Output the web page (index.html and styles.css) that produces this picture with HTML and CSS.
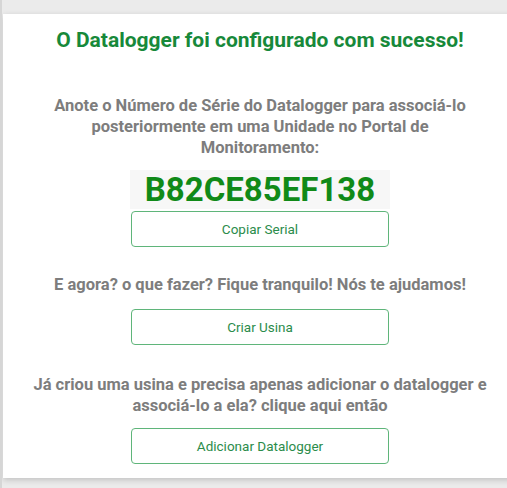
FILE: index.html
```html
<html>
	<head>
		<meta charset="utf-8">
		<title>Datalogger configurado</title>
		<link rel="stylesheet" href="styles.css">
	</head>
	<body>
		<div class="card">
			<h2 class="title">O Datalogger foi configurado com sucesso!</h2>
			<p class="texto texto-serie">Anote o Número de Série do Datalogger para associá-lo posteriormente em uma Unidade no Portal de Monitoramento:</p>
			<div class="serial">B82CE85EF138</div>
			<button class="btn">Copiar Serial</button>
			<p class="texto texto-agora">E agora? o que fazer? Fique tranquilo! Nós te ajudamos!</p>
			<button class="btn">Criar Usina</button>
			<p class="texto texto-usina">Já criou uma usina e precisa apenas adicionar o datalogger e associá-lo a ela? clique aqui então</p>
			<button class="btn">Adicionar Datalogger</button>
		</div>
	</body>
</html>
```
FILE: styles.css
```css
*{
	margin: 0px;
	padding: 0px;
	box-sizing: border-box;
}
body{
	background: #ebebeb;
	font-family: Roboto, "Liberation Sans", sans-serif;
	overflow: hidden;
	border-left: 2px solid #d6d6d6;
}
.card{
	width: 514px;
	margin: 14px 0 0 1px;
	padding: 13px 0 14px;
	background: #fff;
	box-shadow: 0 2px 6px rgba(0,0,0,0.18);
	display: flex;
	flex-direction: column;
	align-items: center;
	text-align: center;
}
.title{
	color: #17893a;
	font-size: 21px;
	font-weight: bold;
	line-height: 26px;
}
.texto{
	color: #7d7d7d;
	font-size: 16.5px;
	font-weight: bold;
	line-height: 21px;
}
.texto-serie{
	width: 430px;
	margin-top: 42px;
}
.serial{
	margin-top: 12px;
	width: 260px;
	height: 39px;
	background: #f7f7f7;
	color: #108a18;
	font-size: 33px;
	font-weight: bold;
	line-height: 40px;
}
.btn{
	width: 258px;
	height: 36px;
	margin-top: 2px;
	background: #fff;
	border: 1px solid #5fb57a;
	border-radius: 4px;
	color: #2b8c4b;
	font-family: Roboto, "Liberation Sans", sans-serif;
	font-size: 13.5px;
	cursor: pointer;
}
.texto-agora{
	margin-top: 27px;
	margin-bottom: 12px;
}
.texto-usina{
	width: 470px;
	margin-top: 29px;
	margin-bottom: 10px;
}
```
